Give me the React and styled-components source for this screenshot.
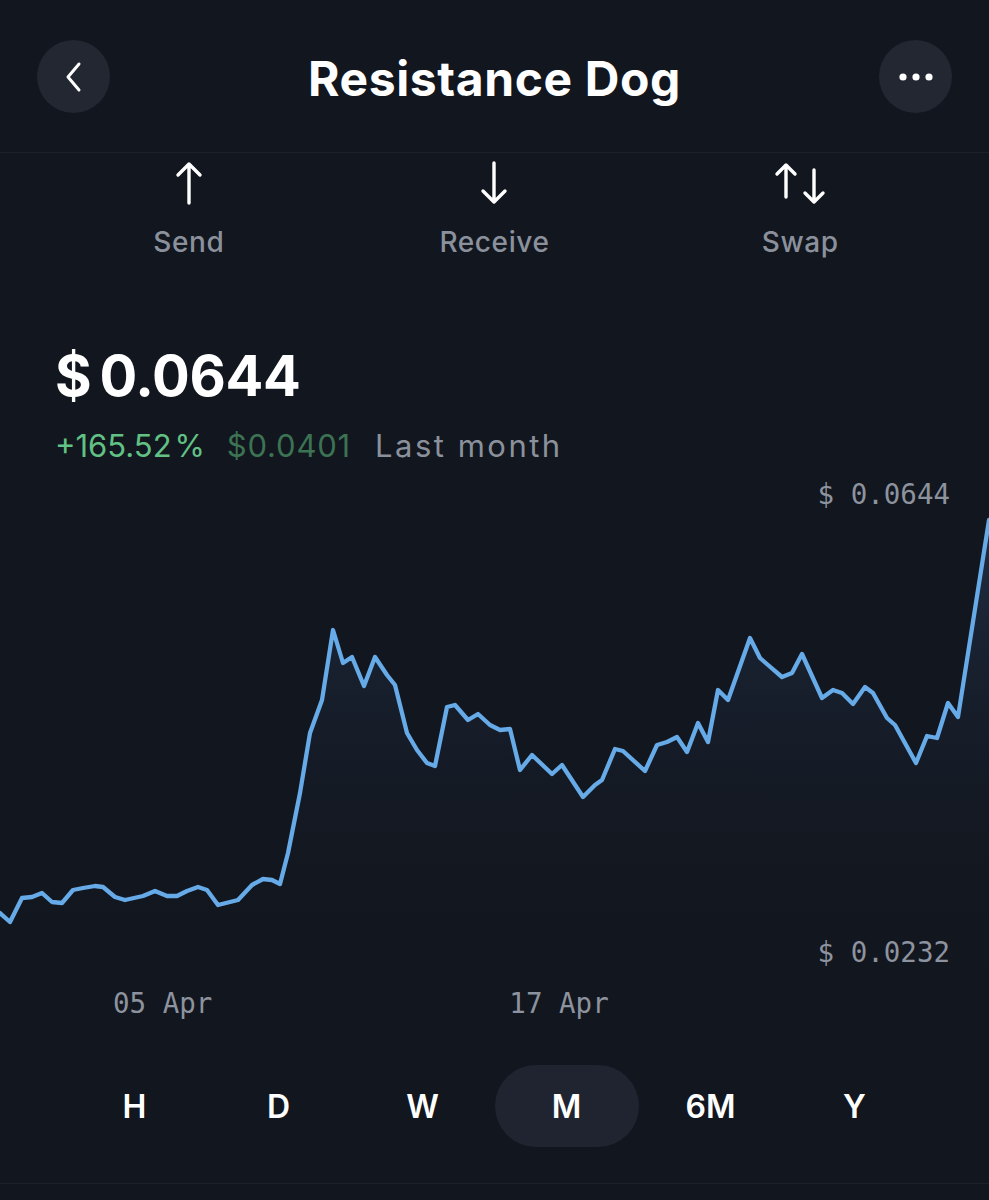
import React from "react";
import styled, { createGlobalStyle } from "styled-components";

const GlobalStyle = createGlobalStyle`
  html, body { margin: 0; padding: 0; background: #12161e; }
  body { font-family: Inter, "Noto Sans", sans-serif; color: #ffffff; }
  * { box-sizing: border-box; }
`;

const Screen = styled.div`
  width: 989px;
  min-height: 1200px;
  background: #12161e;
  display: flex;
  flex-direction: column;
`;

const Header = styled.header`
  height: 153px;
  padding: 0 37px;
  display: flex;
  align-items: center;
  justify-content: space-between;
  border-bottom: 1px solid #1d212a;
`;

const RoundButton = styled.button`
  width: 73px;
  height: 73px;
  border-radius: 50%;
  border: none;
  background: #222732;
  display: flex;
  align-items: center;
  justify-content: center;
  padding: 0;
  margin-top: 1px;
`;

const Title = styled.h1`
  margin: 4px 0 0;
  font-family: Inter, "Noto Sans", sans-serif;
  font-weight: 700;
  font-size: 48px;
  letter-spacing: 0.6px;
  color: #ffffff;
`;

const Actions = styled.nav`
  display: grid;
  grid-template-columns: repeat(3, 1fr);
  padding: 8px 36px 0;
`;

const Action = styled.div`
  display: flex;
  flex-direction: column;
  align-items: center;
  gap: 21px;
`;

const ActionLabel = styled.span`
  font-size: 28px;
  line-height: 32px;
  font-weight: 500;
  letter-spacing: 0.6px;
  color: #8b919c;
`;

const PriceBlock = styled.section`
  padding: 83px 0 0 55px;
  display: flex;
  flex-direction: column;
  gap: 15px;
`;

const Price = styled.div`
  display: flex;
  gap: 8px;
  font-size: 56px;
  line-height: 70px;
  font-weight: 700;
  color: #ffffff;
  letter-spacing: -0.3px;
`;

const Change = styled.div`
  display: flex;
  gap: 22px;
  font-size: 31px;
  line-height: 40px;
  font-weight: 400;
`;

const ChangeText = styled.span`
  color: ${(p) => p.$color};
  letter-spacing: ${(p) => p.$spacing || 0}px;
  margin-left: ${(p) => p.$shift || 0}px;
`;

const ChartArea = styled.div`
  position: relative;
  height: 516px;
  margin-top: 4px;
`;

const AxisLabel = styled.span`
  position: absolute;
  right: 39px;
  top: ${(p) => p.$top}px;
  font-family: "DejaVu Sans Mono", "Liberation Mono", monospace;
  font-size: 27.5px;
  line-height: 34px;
  color: #8d939e;
`;

const DateRow = styled.div`
  display: flex;
  gap: 297px;
  padding-left: 113px;
  font-family: "DejaVu Sans Mono", "Liberation Mono", monospace;
  font-size: 27.5px;
  line-height: 34px;
  color: #8d939e;
`;

const Ranges = styled.div`
  display: grid;
  grid-template-columns: repeat(6, 144px);
  justify-content: center;
  margin-top: 45px;
`;

const Range = styled.div`
  height: 82px;
  border-radius: 41px;
  display: flex;
  align-items: center;
  justify-content: center;
  font-size: 32px;
  font-weight: 600;
  color: #ffffff;
  background: ${(p) => (p.$active ? "#1f2430" : "transparent")};
`;

const Footer = styled.div`
  margin-top: 36px;
  border-top: 1px solid #1d212a;
  flex: 1;
`;

const pts = [
  [0, 913], [10, 922], [22, 898], [32, 897], [42, 893], [52, 902], [62, 903],
  [73, 890], [83, 888], [95, 886], [103, 887], [115, 897], [125, 900], [143, 896],
  [155, 891], [167, 896], [177, 896], [187, 891], [198, 887], [207, 890], [218, 905],
  [230, 902], [238, 900], [252, 885], [263, 879], [272, 880], [280, 884], [288, 853],
  [300, 793], [310, 733], [322, 700], [333, 630], [343, 663], [352, 657], [364, 686],
  [375, 657], [387, 675], [395, 685], [407, 733], [417, 750], [427, 763], [435, 766],
  [447, 707], [455, 705], [468, 720], [478, 714], [490, 725], [500, 730], [510, 729],
  [520, 770], [532, 755], [552, 774], [562, 765], [583, 797], [595, 785], [602, 780],
  [615, 749], [623, 751], [645, 771], [657, 745], [667, 742], [677, 737], [687, 752],
  [698, 723], [708, 742], [718, 690], [728, 700], [750, 638], [760, 658], [768, 665],
  [782, 677], [792, 673], [802, 654], [822, 698], [833, 690], [842, 693], [853, 704],
  [865, 687], [873, 693], [887, 718], [895, 725], [916, 763], [927, 736], [937, 738],
  [948, 703], [958, 717], [989, 520],
];

const linePath = pts.map((p, i) => `${i ? "L" : "M"}${p[0]} ${p[1]}`).join(" ");
const areaPath = `${linePath} L989 980 L0 980 Z`;

const Chart = () => (
  <svg width="989" height="516" viewBox="0 470 989 516" style={{ display: "block" }}>
    <defs>
      <linearGradient id="fill" x1="0" y1="520" x2="0" y2="980" gradientUnits="userSpaceOnUse">
        <stop offset="0" stopColor="#3a5a88" stopOpacity="0.35" />
        <stop offset="0.25" stopColor="#2a3f60" stopOpacity="0.3" />
        <stop offset="1" stopColor="#12161e" stopOpacity="0" />
      </linearGradient>
    </defs>
    <path d={areaPath} fill="url(#fill)" />
    <path d={linePath} fill="none" stroke="#66aae8" strokeWidth="4.3" strokeLinejoin="round" strokeLinecap="round" />
  </svg>
);

const ArrowUp = () => (
  <svg width="44" height="44" viewBox="0 0 44 44">
    <path d="M22 42 V3 M11 14 L22 3 L33 14" fill="none" stroke="#fff" strokeWidth="3.4" strokeLinecap="round" strokeLinejoin="round" />
  </svg>
);

const ArrowDown = () => (
  <svg width="44" height="44" viewBox="0 0 44 44">
    <path d="M22 2 V41 M11 30 L22 41 L33 30" fill="none" stroke="#fff" strokeWidth="3.4" strokeLinecap="round" strokeLinejoin="round" />
  </svg>
);

const SwapIcon = () => (
  <svg width="60" height="44" viewBox="0 0 60 44">
    <path d="M16 36 V4 M7 13 L16 4 L25 13" fill="none" stroke="#fff" strokeWidth="3.4" strokeLinecap="round" strokeLinejoin="round" />
    <path d="M44 9 V41 M35 32 L44 41 L53 32" fill="none" stroke="#fff" strokeWidth="3.4" strokeLinecap="round" strokeLinejoin="round" />
  </svg>
);

const Chevron = () => (
  <svg width="20" height="32" viewBox="0 0 20 32">
    <path d="M15 3 L4 16 L15 29" fill="none" stroke="#fff" strokeWidth="3" strokeLinecap="round" strokeLinejoin="round" />
  </svg>
);

const Dots = () => (
  <svg width="36" height="10" viewBox="0 0 36 10">
    <circle cx="5" cy="5" r="3.6" fill="#fff" />
    <circle cx="18" cy="5" r="3.6" fill="#fff" />
    <circle cx="31" cy="5" r="3.6" fill="#fff" />
  </svg>
);

const ranges = ["H", "D", "W", "M", "6M", "Y"];

export default function App() {
  return (
    <Screen>
      <GlobalStyle />
      <Header>
        <RoundButton aria-label="Back"><Chevron /></RoundButton>
        <Title>Resistance Dog</Title>
        <RoundButton aria-label="More"><Dots /></RoundButton>
      </Header>
      <Actions>
        <Action><ArrowUp /><ActionLabel>Send</ActionLabel></Action>
        <Action><ArrowDown /><ActionLabel>Receive</ActionLabel></Action>
        <Action><SwapIcon /><ActionLabel>Swap</ActionLabel></Action>
      </Actions>
      <PriceBlock>
        <Price><span>$</span><span>0.0644</span></Price>
        <Change>
          <ChangeText $color="#62c184">+165.52&#8202;%</ChangeText>
          <ChangeText $color="#3b7353" $spacing={0.8}>$0.0401</ChangeText>
          <ChangeText $color="#8b919c" $spacing={2.5} $shift={2}>Last month</ChangeText>
        </Change>
      </PriceBlock>
      <ChartArea>
        <Chart />
        <AxisLabel $top={7}>$ 0.0644</AxisLabel>
        <AxisLabel $top={465}>$ 0.0232</AxisLabel>
      </ChartArea>
      <DateRow>
        <span>05 Apr</span>
        <span>17 Apr</span>
      </DateRow>
      <Ranges>
        {ranges.map((r) => (
          <Range key={r} $active={r === "M"}>{r}</Range>
        ))}
      </Ranges>
      <Footer />
    </Screen>
  );
}
